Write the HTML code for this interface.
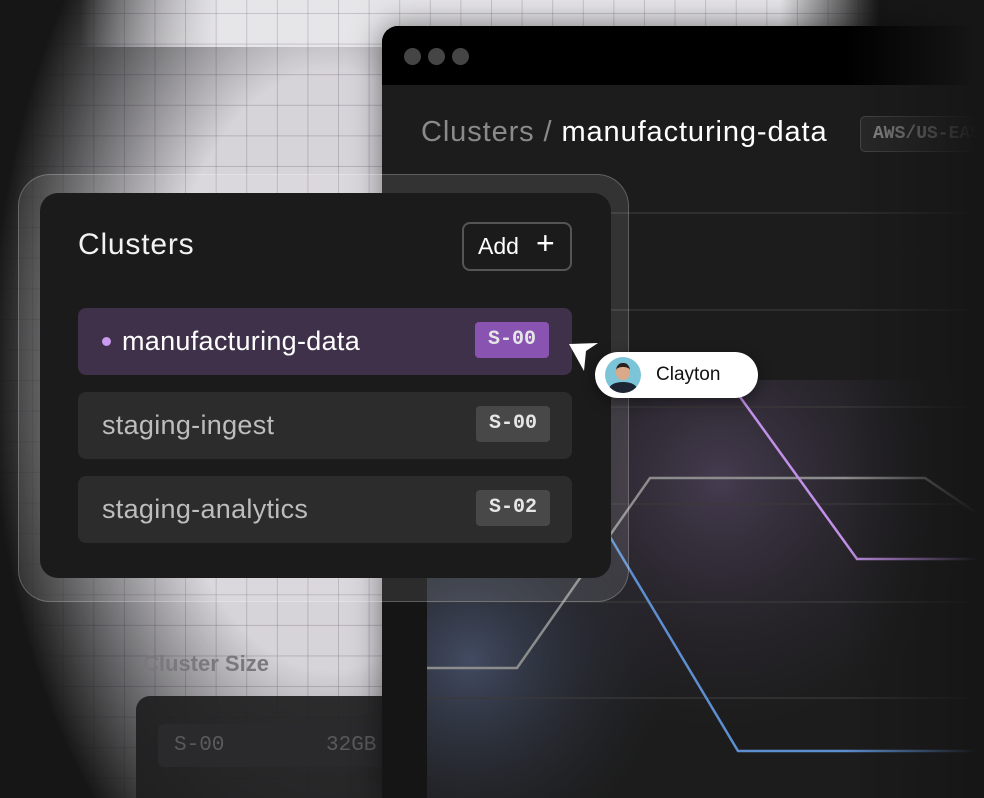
<!DOCTYPE html>
<html><head><meta charset="utf-8"><style>
*{margin:0;padding:0;box-sizing:border-box}
html,body{width:984px;height:798px;overflow:hidden}
body{background:#161616;position:relative;font-family:"Liberation Sans",sans-serif}
.abs{position:absolute}
.light{left:0;top:0;width:984px;height:798px;background-color:#d6d4d9;
background-image:linear-gradient(to right,rgba(120,110,130,.35) 1px,transparent 1px),linear-gradient(to bottom,rgba(120,110,130,.35) 1px,transparent 1px);
background-size:30.6px 30.6px;background-position:1.5px 13px;
-webkit-mask-image:radial-gradient(ellipse 340px 600px at 330px 370px,#000 50%,transparent 100%);mask-image:radial-gradient(ellipse 340px 600px at 330px 370px,#000 50%,transparent 100%)}
.toplight{left:0;top:0;width:984px;height:47px;background-color:#e6e5e8;
background-image:linear-gradient(to right,rgba(120,110,130,.3) 1px,transparent 1px),linear-gradient(to bottom,rgba(120,110,130,.3) 1px,transparent 1px);
background-size:30.6px 30.6px;background-position:1.5px 13px;
-webkit-mask-image:linear-gradient(to right,transparent 80px,#000 220px,#000 780px,transparent 880px);mask-image:linear-gradient(to right,transparent 80px,#000 220px,#000 780px,transparent 880px)}
.browser{left:382px;top:26px;width:620px;height:772px;background:#1c1c1c;border-radius:16px 0 0 0;overflow:hidden;box-shadow:0 0 30px rgba(0,0,0,.5)}
.tb{height:59px;background:#000}
.dot{position:absolute;top:22px;width:17px;height:17px;border-radius:50%;background:#454545}
.title{left:39px;top:90px;font-size:29px;color:#fff;white-space:nowrap;letter-spacing:.9px}
.title span{color:#8a8a8a}
.aws{left:478px;top:90px;height:36px;padding:0 12px;border:1px solid #4a4a4a;border-radius:5px;background:#2a2a2a;font-family:"Liberation Mono",monospace;font-weight:bold;font-size:18px;color:#9a9a9a;line-height:34px;white-space:nowrap}
.glass{left:18px;top:174px;width:611px;height:428px;border-radius:32px;background:rgba(255,255,255,.1);border:1.5px solid rgba(255,255,255,.22)}
.panel{left:40px;top:193px;width:571px;height:385px;border-radius:18px;background:#1b1b1b}
.row{position:absolute;left:38px;width:494px;height:67px;border-radius:8px;background:#2c2c2c}
.row .t{position:absolute;left:24px;top:0;line-height:67px;font-size:27px;color:#bdbdbd;letter-spacing:.3px;white-space:nowrap}
.badge{position:absolute;right:22px;top:14px;width:74px;height:36px;border-radius:4px;background:#484848;color:#e6e6e6;font-family:"Liberation Mono",monospace;font-weight:bold;font-size:20px;text-align:center;line-height:36px}
.fade{right:0;top:0;width:140px;height:798px;background:linear-gradient(to right,rgba(22,22,22,0),#161616 95%)}
</style></head><body>
<div class="abs light"></div>
<div class="abs toplight"></div>
<div class="abs" style="left:143px;top:651px;font-size:22px;font-weight:bold;color:#7a787c">Cluster Size</div>
<div class="abs" style="left:136px;top:696px;width:260px;height:102px;border-radius:14px 14px 0 0;background:rgba(30,30,32,.92);overflow:hidden">
 <div class="abs" style="left:22px;top:28px;width:240px;height:43px;border-radius:6px;background:#2a2a2c;font-family:'Liberation Mono',monospace;font-size:21px;color:#5a5a5c;line-height:43px"><span style="position:absolute;left:16px">S-00</span><span style="position:absolute;left:168px">32GB</span></div>
</div>
<div class="abs browser">
 <div class="tb"></div>
 <div class="dot" style="left:22px"></div><div class="dot" style="left:46px"></div><div class="dot" style="left:70px"></div>
 <div class="abs title"><span>Clusters /</span> manufacturing-data</div>
 <div class="abs aws">AWS/US-EAST</div>
 <div class="abs" style="left:0;top:552px;width:45px;height:220px;background:#151515"></div>
</div>
<svg class="abs" style="left:0;top:0" width="984" height="798">
 <defs>
  <radialGradient id="pg" cx="720" cy="480" r="260" gradientUnits="userSpaceOnUse"><stop offset="0" stop-color="#4a3f55" stop-opacity=".9"/><stop offset="1" stop-color="#2a2630" stop-opacity="0"/></radialGradient>
  <radialGradient id="bg" cx="470" cy="660" r="200" gradientUnits="userSpaceOnUse"><stop offset="0" stop-color="#46506a" stop-opacity=".9"/><stop offset="1" stop-color="#2a2e38" stop-opacity="0"/></radialGradient>
 </defs>
 <rect x="427" y="380" width="557" height="418" fill="url(#pg)"/>
 <rect x="427" y="500" width="350" height="298" fill="url(#bg)"/>
 <g stroke="#3a3a3a" stroke-width="1.3">
  <line x1="427" y1="213" x2="984" y2="213"/><line x1="427" y1="310" x2="984" y2="310"/>
  <line x1="427" y1="407" x2="984" y2="407"/><line x1="427" y1="504" x2="984" y2="504"/>
  <line x1="427" y1="602" x2="984" y2="602"/><line x1="427" y1="698" x2="984" y2="698"/>
 </g>
 <polyline points="427,668 517,668 650,478 925,478 984,518" fill="none" stroke="#8c8c8c" stroke-width="2.5"/>
 <polyline points="735,390 857,559 984,559" fill="none" stroke="#c190e8" stroke-width="2.5"/>
 <polyline points="600,520 738,751 984,751" fill="none" stroke="#5d8fd0" stroke-width="2.5"/>
</svg>
<div class="abs fade"></div>
<div class="abs glass"></div>
<div class="abs panel">
 <div class="abs" style="left:38px;top:35px;font-size:30px;color:#f2f2f2;letter-spacing:.8px">Clusters</div>
 <div class="abs" style="left:422px;top:29px;width:110px;height:49px;border:2px solid #555;border-radius:8px;color:#fff;font-size:23px;line-height:45px;padding-left:14px">Add <span style="font-size:32px;position:absolute;left:72px;top:-3px;font-weight:300">+</span></div>
 <div class="row" style="top:115px;background:#3f3149"><span style="position:absolute;left:24px;top:29px;width:9px;height:9px;border-radius:50%;background:#c99af0"></span><span class="t" style="left:44px;color:#fff">manufacturing-data</span><div class="badge" style="right:23px;background:#8953b1">S-00</div></div>
 <div class="row" style="top:199px"><span class="t">staging-ingest</span><div class="badge">S-00</div></div>
 <div class="row" style="top:283px"><span class="t">staging-analytics</span><div class="badge">S-02</div></div>
</div>
<svg class="abs" style="left:566px;top:340px" width="40" height="36"><polygon points="3,4 32,3 20,11 18,31" fill="#fff"/></svg>
<div class="abs" style="left:595px;top:352px;width:163px;height:46px;border-radius:23px;background:#fff;box-shadow:0 4px 14px rgba(0,0,0,.4)">
 <div class="abs" style="left:10px;top:5px;width:36px;height:36px;border-radius:50%;background:#7cc4d8;overflow:hidden">
  <div class="abs" style="left:11px;top:6px;width:14px;height:17px;border-radius:45%;background:#d9a98a;border-top:4px solid #2a211c"></div>
  <div class="abs" style="left:4px;top:25px;width:28px;height:14px;border-radius:50% 50% 0 0;background:#1e2532"></div>
 </div>
 <div class="abs" style="left:61px;top:0;line-height:46px;font-size:19px;color:#111">Clayton</div>
</div>
</body></html>
